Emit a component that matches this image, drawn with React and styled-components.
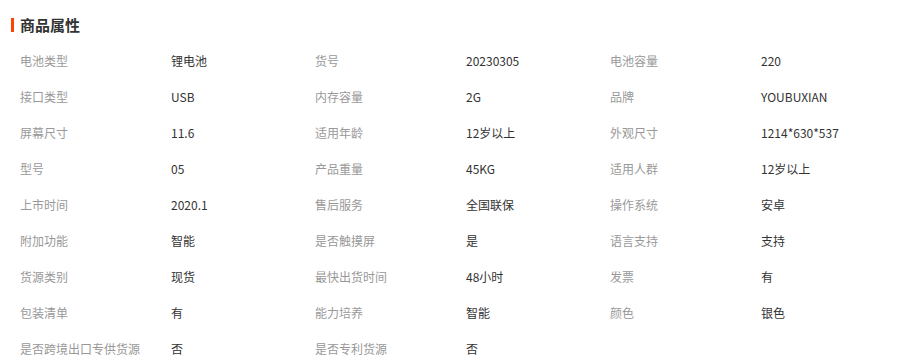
import React from "react";
import styled, { createGlobalStyle } from "styled-components";

const rows = [
	["电池类型", "锂电池", "货号", "20230305", "电池容量", "220"],
	["接口类型", "USB", "内存容量", "2G", "品牌", "YOUBUXIAN"],
	["屏幕尺寸", "11.6", "适用年龄", "12岁以上", "外观尺寸", "1214*630*537"],
	["型号", "05", "产品重量", "45KG", "适用人群", "12岁以上"],
	["上市时间", "2020.1", "售后服务", "全国联保", "操作系统", "安卓"],
	["附加功能", "智能", "是否触摸屏", "是", "语言支持", "支持"],
	["货源类别", "现货", "最快出货时间", "48小时", "发票", "有"],
	["包装清单", "有", "能力培养", "智能", "颜色", "银色"],
	["是否跨境出口专供货源", "否", "是否专利货源", "否"],
];

const GlobalStyle = createGlobalStyle`
	body {
		margin: 0;
		background: #fff;
		font-family: "Noto Sans CJK SC", "Liberation Sans", sans-serif;
	}
`;

const Section = styled.section`
	width: 916px;
	height: 364px;
	overflow: hidden;
`;

const Title = styled.h3`
	margin: 0;
	padding: 16px 0 0 11px;
	height: 26px;
	display: flex;
	align-items: center;
	gap: 6px;
	font-size: 15px;
	font-weight: bold;
	color: #333;
	line-height: 18px;
	align-items: flex-start;
	&::before {
		content: "";
		width: 3px;
		height: 14px;
		margin-top: 2px;
		background: #ff4400;
	}
`;

const Grid = styled.div`
	display: grid;
	grid-template-columns: repeat(3, 151px 144px);
	grid-auto-rows: 36px;
	padding-left: 20px;
	font-size: 12px;
`;

const Cell = styled.div`
	display: flex;
	align-items: center;
	white-space: nowrap;
	color: ${(p) => (p.$label ? "#999" : "#333")};
`;

const App = () => {
	return (
		<Section>
			<GlobalStyle />
			<Title>商品属性</Title>
			<Grid>
				{rows.map((row) =>
					row.map((text, i) => (
						<Cell key={row[0] + i} $label={i % 2 === 0}>
							{text}
						</Cell>
					))
				)}
			</Grid>
		</Section>
	);
};

export default App;
